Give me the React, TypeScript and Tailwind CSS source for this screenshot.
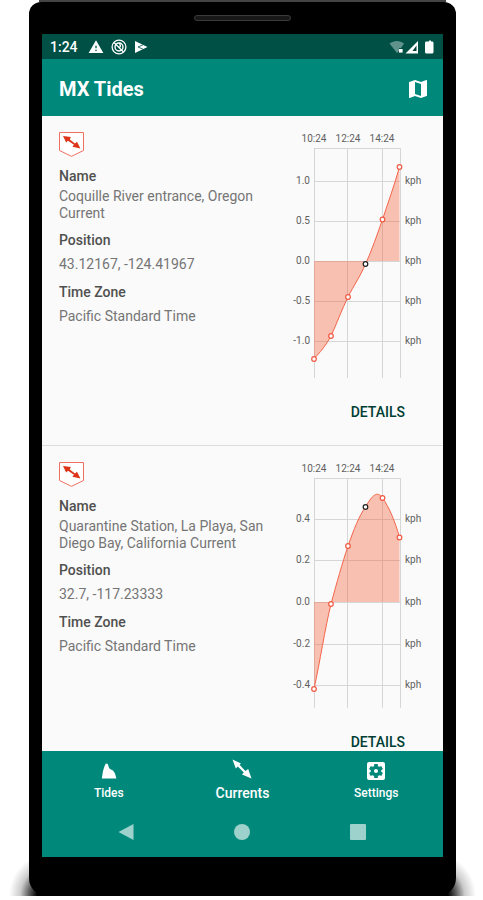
import { MdMap, MdSettingsApplications, MdWarning } from 'react-icons/md';

type Point = { x: number; y: number; now?: boolean };

type Station = {
  name: string;
  position: string;
  timeZone: string;
  zero: number;
  ticks: { label: string; y: number }[];
  points: Point[];
  curve: string;
};

const STATIONS: Station[] = [
  {
    name: 'Coquille River entrance, Oregon Current',
    position: '43.12167, -124.41967',
    timeZone: 'Pacific Standard Time',
    zero: 129,
    ticks: [
      { label: '1.0', y: 49 },
      { label: '0.5', y: 89 },
      { label: '0.0', y: 129 },
      { label: '-0.5', y: 169 },
      { label: '-1.0', y: 209 },
    ],
    points: [
      { x: 24, y: 227 },
      { x: 41, y: 204 },
      { x: 58, y: 165 },
      { x: 75.5, y: 132, now: true },
      { x: 92.5, y: 87.5 },
      { x: 109.5, y: 35 },
    ],
    curve: 'M24 227 C30 220 35 215 41 204 C47 191 52 177 58 165 C64 153 70 145 75.5 132 C82 118 87 103 92.5 87.5 C98 71 104 54 109.5 35',
  },
  {
    name: 'Quarantine Station, La Playa, San Diego Bay, California Current',
    position: '32.7, -117.23333',
    timeZone: 'Pacific Standard Time',
    zero: 140,
    ticks: [
      { label: '0.4', y: 57 },
      { label: '0.2', y: 98 },
      { label: '0.0', y: 140 },
      { label: '-0.2', y: 182 },
      { label: '-0.4', y: 223 },
    ],
    points: [
      { x: 24, y: 227 },
      { x: 41, y: 142 },
      { x: 58, y: 84 },
      { x: 75.5, y: 45, now: true },
      { x: 92.5, y: 36 },
      { x: 109.5, y: 75.5 },
    ],
    curve: 'M24 227 C30 200 35 166 41 142 C47 120 52 102 58 84 C64 67 69 54 75.5 45 C84 30 88 30 92.5 36 C99 45 105 59 109.5 75.5',
  },
];

const HOURS = [
  { label: '10:24', x: 24 },
  { label: '12:24', x: 58 },
  { label: '14:24', x: 92 },
];

function Arrows({ className }: { className?: string }) {
  return (
    <svg viewBox="0 0 20 20" className={className} fill="currentColor" aria-hidden="true">
      <path d="M0.5 0.5 L9 4.4 L7.6 5.8 L13.4 12 L16.2 10 L19.5 19.5 L10 15.6 L11.8 13.4 L5.8 7.6 L3.8 9.6 Z" />
    </svg>
  );
}

function Badge() {
  return (
    <svg viewBox="0 0 25 25" className="h-[25px] w-[25px]" aria-hidden="true">
      <path d="M0.5 0.5 H24.5 V18.5 L12.5 24.3 L0.5 18.5 Z" fill="#fff" stroke="#ee7060" />
      <path d="M4 4 L11.8 5 L10.8 7.6 L16 11.6 L18 9.8 L21.4 16.4 L13.4 14.8 L15 12.8 L9 8.8 L7.2 10.4 Z" fill="#dd3418" />
    </svg>
  );
}

function Chart({ station, id }: { station: Station; id: string }) {
  const { zero, ticks, points, curve } = station;
  return (
    <svg viewBox="0 0 137 248" className="h-[248px] w-[137px]" role="img" aria-label={`${station.name} speed`}>
      <defs>
        <clipPath id={id}>
          <rect x="24" y="0" width="86" height="248" />
        </clipPath>
      </defs>
      <g stroke="#d6d6d6">
        <path d="M24 16.5 H111" />
        {[24.5, 57.5, 92.5, 110.5].map((x) => (
          <path key={x} d={`M${x} 16 V246`} />
        ))}
        {ticks.map((t) => (
          <path key={t.label} d={`M24 ${t.y + 0.5} H111`} />
        ))}
      </g>
      <path d={`${curve} V${zero} H24 Z`} fill="#f4623a" fillOpacity="0.38" clipPath={`url(#${id})`} />
      <path d={curve} fill="none" stroke="#f4654a" />
      {points.map((p) => (
        <circle key={p.x} cx={p.x} cy={p.y} r="2.3" fill="#fff" stroke={p.now ? '#222' : '#f05a44'} strokeWidth="1.2" />
      ))}
      <g className="fill-[#5f5f5f] text-[10px]">
        {HOURS.map((h) => (
          <text key={h.label} x={h.x} y="10" textAnchor="middle">
            {h.label}
          </text>
        ))}
        {ticks.map((t) => (
          <text key={t.label} x="20" y={t.y + 3} textAnchor="end">
            {t.label}
          </text>
        ))}
        {ticks.map((t) => (
          <text key={t.label} x="115" y={t.y + 3}>
            kph
          </text>
        ))}
      </g>
    </svg>
  );
}

function StationCard({ station, id }: { station: Station; id: string }) {
  return (
    <li className="flex flex-col border-b border-[#dcdcdc] px-4 pt-4 pb-[15px]">
      <div className="flex justify-between">
        <div className="min-w-0 flex-1 pl-px">
          <Badge />
          <dl className="mt-[11px] text-[14px] leading-[17px] text-[#757575]">
            <dt className="font-medium text-[#505050]">Name</dt>
            <dd className="mt-[3px]">{station.name}</dd>
            <dt className="mt-[10px] font-medium text-[#505050]">Position</dt>
            <dd className="mt-[7px]">{station.position}</dd>
            <dt className="mt-[11px] font-medium text-[#505050]">Time Zone</dt>
            <dd className="mt-[7px]">{station.timeZone}</dd>
          </dl>
        </div>
        <Chart station={station} id={id} />
      </div>
      <button type="button" className="mt-[14px] mr-[6px] h-9 self-end px-4 text-[14px] font-medium text-[#003d33]">
        DETAILS
      </button>
    </li>
  );
}

function StatusBar() {
  return (
    <div className="flex h-[25px] shrink-0 items-center bg-[#005046] px-2 text-white">
      <span className="w-[38px] pt-px text-[14px] font-medium">1:24</span>
      <MdWarning size={16} />
      <svg viewBox="0 0 16 16" className="ml-[7px] h-4 w-4" fill="none" stroke="currentColor" aria-hidden="true">
        <circle cx="8" cy="8" r="6.9" strokeWidth="1.3" />
        <circle cx="8" cy="8" r="4" strokeWidth="1.4" />
        <path d="M3 3.5 L12.5 13 M8 4 C10 6 10 7 8.5 8.5" strokeWidth="1.3" />
      </svg>
      <svg viewBox="0 0 14 14" className="ml-[7px] h-[14px] w-[14px]" aria-hidden="true">
        <path d="M1 1 L13.5 7 L1 13 Z" fill="#fff" />
        <path d="M4 7 L9 4.8 M4 7 L9 9.2" stroke="#005046" strokeWidth="0.8" />
      </svg>
      <svg viewBox="0 0 46 14" className="ml-auto h-[14px] w-[46px]" aria-hidden="true">
        <path d="M0.5 3.5 C5 0 11 0 15 3.5 L12 8 H10 V11 L8 13 Z" fill="#5f938c" />
        <rect x="10" y="9" width="3.6" height="3.6" fill="#fff" />
        <path d="M29 1 V13.5 H16.5 Z" fill="#fff" />
        <path d="M27.5 5.5 V11 H23.5 Z" fill="#003b33" />
        <path d="M38 1.6 H40 V0.5 H42 V1.6 H43 Q44.5 1.6 44.5 3 V12 Q44.5 13.5 43 13.5 H37.5 Q36 13.5 36 12 V3 Q36 1.6 37.5 1.6 Z" fill="#fff" />
      </svg>
    </div>
  );
}

function TideIcon() {
  return (
    <svg viewBox="0 0 16 16" className="h-4 w-4" fill="currentColor" aria-hidden="true">
      <path d="M0.8 15.5 L2 8 L3.4 3.5 L4.8 0.5 L6.8 1 L8 4.8 L9 6 L12 7.4 L14 10.5 L15.4 15.5 Z" />
    </svg>
  );
}

export default function App() {
  return (
    <div className="flex h-screen flex-col bg-white pr-[27px] pb-1 pl-[29px] font-[Roboto,sans-serif]">
      <div className="mx-[10px] h-[2px] shrink-0 bg-[#444]" />
      <div className="relative flex min-h-0 flex-1 flex-col">
        {/* floor shadow either side of the handset */}
        <div className="absolute bottom-0 -left-5 h-10 w-10 bg-[radial-gradient(ellipse_40px_42px_at_bottom_right,#000_30%,#0009_52%,#0003_72%,transparent_100%)]" />
        <div className="absolute -right-5 bottom-0 h-10 w-10 bg-[radial-gradient(ellipse_40px_42px_at_bottom_left,#000_30%,#0009_52%,#0003_72%,transparent_100%)]" />

        <div className="relative flex min-h-0 flex-1 flex-col rounded-t-[12px] rounded-b-[18px] bg-black px-[13px] pb-[39px]">
          <div className="flex h-8 shrink-0 items-center justify-center">
            <div className="h-[6px] w-[97px] rounded-[3px] border border-[#3a3a3a] bg-[#181818]" />
          </div>

          <div className="flex min-h-0 flex-1 flex-col bg-[#fafafa]">
            <StatusBar />
            <header className="flex h-[57px] shrink-0 items-center justify-between bg-[#00897b] pt-[2px] pr-[13px] pl-[17px] text-white">
              <h1 className="text-[20px] font-bold">MX Tides</h1>
              <button type="button" aria-label="Map">
                <MdMap size={24} />
              </button>
            </header>

            <ul className="min-h-0 flex-1 overflow-y-auto [scrollbar-width:none]">
              {STATIONS.map((station, i) => (
                <StationCard key={station.name} station={station} id={`area-${i}`} />
              ))}
            </ul>

            <nav className="grid h-14 shrink-0 grid-cols-3 bg-[#00897b] text-white">
              <a href="#tides" className="flex flex-col items-center pt-2 text-[12px] font-medium">
                <span className="flex h-6 items-center">
                  <TideIcon />
                </span>
                <span className="leading-5">Tides</span>
              </a>
              <a href="#currents" className="flex flex-col items-center pt-2 text-[14px] font-medium" aria-current="page">
                <span className="flex h-6 items-start">
                  <Arrows className="h-5 w-5" />
                </span>
                <span className="leading-5">Currents</span>
              </a>
              <a href="#settings" className="flex flex-col items-center pt-2 text-[12px] font-medium">
                <MdSettingsApplications size={24} />
                <span className="leading-5">Settings</span>
              </a>
            </nav>

            <div className="flex h-[50px] shrink-0 items-center justify-center gap-[100px] bg-[#00897b] pr-px text-[#9dd1cb]">
              <button type="button" aria-label="Back">
                <svg viewBox="0 0 16 16" className="h-4 w-4" fill="currentColor">
                  <path d="M0.5 8 L15.5 0 V16 Z" />
                </svg>
              </button>
              <button type="button" aria-label="Home" className="h-4 w-4 rounded-full bg-current" />
              <button type="button" aria-label="Recent apps" className="h-4 w-4 rounded-[1px] bg-current" />
            </div>
          </div>
        </div>
      </div>
    </div>
  );
}
